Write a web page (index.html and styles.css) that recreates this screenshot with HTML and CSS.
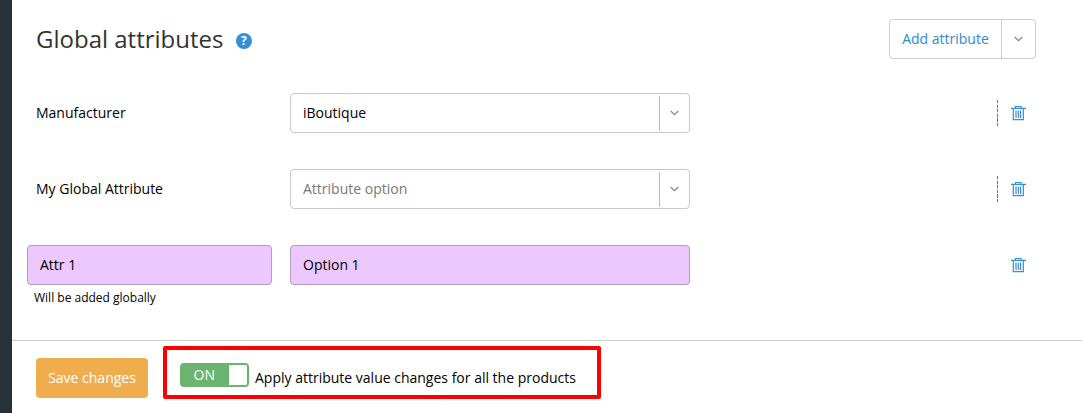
FILE: index.html
```html
<!DOCTYPE html>
<html lang="en">
<head>
<meta charset="utf-8">
<title>Global attributes</title>
<link rel="stylesheet" href="styles.css">
</head>
<body>
<svg class="defs" width="0" height="0">
  <symbol id="trash" viewBox="0 0 15 15">
    <path d="M0 2.300h15M4.500 2V.5h5.500V2M2.300 3v10.600h10V3" fill="none" stroke="#3490d5" stroke-width="1.200"/>
    <path d="M5 4.500v7.500M7.300 4.500v7.500M9.600 4.500v7.500" fill="none" stroke="#3490d5" stroke-width="1.200"/>
  </symbol>
  <symbol id="chevron" viewBox="0 0 9 6">
    <path d="M.7 1l3.800 3.600L8.300 1" fill="none" stroke="#888" stroke-width="1.300"/>
  </symbol>
</svg>
<div class="app">
  <aside class="sidebar"></aside>
  <main class="main">
    <header class="header">
      <h1 class="title">Global attributes</h1>
      <span class="help">?</span>
      <div class="split">
        <button class="split-main">Add attribute</button>
        <button class="split-arrow"><svg class="chevron"><use href="#chevron"/></svg></button>
      </div>
    </header>
    <section class="rows">
      <div class="row">
        <div class="label">Manufacturer</div>
        <div class="field"><span>iBoutique</span><span class="drop"><svg class="chevron"><use href="#chevron"/></svg></span></div>
        <div class="actions dashed"><svg class="trash"><use href="#trash"/></svg></div>
      </div>
      <div class="row">
        <div class="label">My Global Attribute</div>
        <div class="field placeholder"><span>Attribute option</span><span class="drop"><svg class="chevron"><use href="#chevron"/></svg></span></div>
        <div class="actions dashed"><svg class="trash"><use href="#trash"/></svg></div>
      </div>
      <div class="row new">
        <div class="field added name">Attr 1</div>
        <div class="field added">Option 1</div>
        <div class="actions"><svg class="trash"><use href="#trash"/></svg></div>
      </div>
      <div class="note">Will be added globally</div>
    </section>
    <footer class="footer">
      <button class="save">Save changes</button>
      <div class="highlight">
        <div class="toggle"><span class="on">ON</span><span class="knob"></span></div>
        <span class="apply">Apply attribute value changes for all the products</span>
      </div>
    </footer>
  </main>
</div>
</body>
</html>
```
FILE: styles.css
```css
* { box-sizing: border-box; }
body {
  margin: 0;
  background: #fff;
  color: #000;
  font: 14px/20px "Open Sans", "Noto Sans", sans-serif;
}
button { font: inherit; padding: 0; margin: 0; border: 0; background: none; }
.defs { position: absolute; }
.app { display: flex; height: 413px; overflow: hidden; }
.sidebar { width: 12px; background: #263238; flex: none; }
.main { flex: 1; display: flex; flex-direction: column; }
.header { display: flex; align-items: center; height: 40px; margin: 19px 46px 34px 24px; }
.title { margin: 0; font-size: 24px; line-height: 40px; font-weight: 400; color: #333; white-space: nowrap; }
.help {
  width: 16px; height: 16px; margin: 4px 0 0 12.5px; border-radius: 50%;
  background: #348fd4; color: #fff; font-size: 12px; font-weight: 700;
  line-height: 16px; text-align: center;
}
.split { display: flex; margin-left: auto; width: 147px; height: 40px; border: 1px solid #ccc; border-radius: 4px; }
.split-main { width: 111px; color: #2d8cd0; font-weight: 500; white-space: nowrap; }
.split-arrow { flex: 1; border-left: 1px solid #ccc; display: flex; align-items: center; justify-content: center; padding-right: 1px; }
.chevron { width: 9px; height: 6px; display: block; }
.rows { height: 247px; flex: none; }
.row { display: flex; align-items: center; height: 40px; margin: 0 46px 36px 24px; }
.label { width: 254px; }
.field {
  width: 400px; height: 40px; border: 1px solid #c8c8c8; border-radius: 4px;
  padding-left: 12px; display: flex; align-items: center; justify-content: space-between;
}
.placeholder { color: #777; }
.drop { width: 30px; height: 35px; border-left: 1px solid #bbb; display: flex; align-items: center; justify-content: center; }
.actions { margin-left: auto; height: 26px; padding: 0 10px 0 14px; display: flex; align-items: center; }
.dashed {
  background: repeating-linear-gradient(#757575 0 3.2px, #ddd 3.2px 4.6px) left / 1px 100% no-repeat;
}
.trash { width: 15px; height: 15px; display: block; }
.new { margin-left: 15px; margin-bottom: 0; }
.added { background: #edc8ff; border-color: #b59bc4; }
.name { width: 245px; margin-right: 18px; }
.note { font-size: 12px; line-height: 18px; margin: 4px 0 0 22px; }
.footer { flex: 1; border-top: 1px solid #ccc; padding: 5px 0 0 24px; display: flex; align-items: flex-start; }
.save { width: 112px; height: 40px; margin-top: 12px; border-radius: 4px; background: #f0ad4e; color: #fff; font-weight: 500; }
.highlight {
  width: 438px; height: 53px; margin-left: 15px; border: 4px solid #f00; border-radius: 2px;
  display: flex; align-items: flex-start; padding: 13px 0 0 13px;
}
.toggle {
  width: 69px; height: 24px; border-radius: 4px; background: #6ab46f; color: #fff;
  display: flex; align-items: center; justify-content: space-between; padding: 0 2px 0 13.5px;
}
.knob { width: 18px; height: 20px; background: #fff; border-radius: 0 1px 1px 0; }
.apply { margin: 5px 0 0 6px; white-space: nowrap; }
```
